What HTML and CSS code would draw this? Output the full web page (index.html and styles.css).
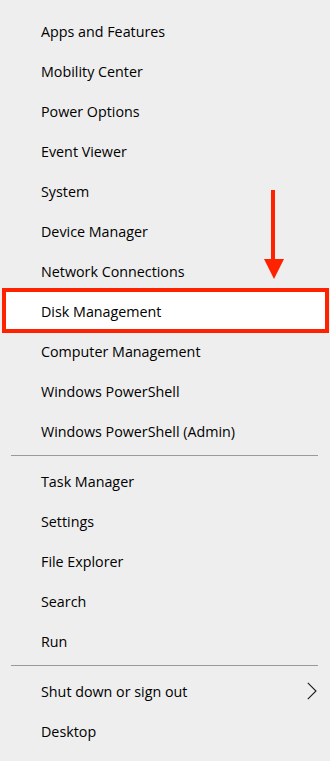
FILE: index.html
```html
<!DOCTYPE html>
<html lang="en">
<head>
<meta charset="UTF-8">
<meta name="viewport" content="width=device-width, initial-scale=1.0">
<title>Quick Link Menu</title>
<link rel="stylesheet" href="styles.css">
</head>
<body>

<div class="menu">
    <!-- First group -->
    <div class="item">Apps and Features</div>
    <div class="item">Mobility Center</div>
    <div class="item">Power Options</div>
    <div class="item">Event Viewer</div>
    <div class="item">System</div>
    <div class="item">Device Manager</div>
    <div class="item">Network Connections</div>
    <div class="item highlight"><span>Disk Management</span></div>
    <div class="item">Computer Management</div>
    <div class="item">Windows PowerShell</div>
    <div class="item">Windows PowerShell (Admin)</div>

    <div class="separator"></div>

    <!-- Second group -->
    <div class="item">Task Manager</div>
    <div class="item">Settings</div>
    <div class="item">File Explorer</div>
    <div class="item">Search</div>
    <div class="item">Run</div>

    <div class="separator"></div>

    <!-- Third group -->
    <div class="item submenu">
        <span>Shut down or sign out</span>
        <svg class="chevron" width="10" height="18" viewBox="0 0 10 18">
            <path d="M0.8 0.8 L9 9 L0.8 17.2" fill="none" stroke="#1a1a1a" stroke-width="1.1"/>
        </svg>
    </div>
    <div class="item">Desktop</div>

    <!-- Red arrow pointing at Disk Management -->
    <svg class="arrow" width="20" height="90" viewBox="0 0 20 90">
        <rect x="7" y="0" width="4" height="72" fill="#ff2200"/>
        <polygon points="0,69 20,69 10,89" fill="#ff2200"/>
    </svg>
</div>

</body>
</html>
```

FILE: styles.css
```css
body {
    margin: 0;
    padding: 0;
    background-color: #eeeeee;
    color: #000000;
    font-family: "Open Sans", "Noto Sans", Arial, sans-serif;
    font-size: 14.3px;
}

.menu {
    position: relative;
    padding: 11px 0 9px 0;
}

.item {
    display: flex;
    align-items: center;
    height: 40px;
    padding-left: 41px;
    padding-right: 13px;
    position: relative;
}

.submenu {
    justify-content: space-between;
}

.highlight span {
    position: relative;
    z-index: 1;
}

.highlight::before {
    content: "";
    position: absolute;
    top: -3px;
    bottom: -2px;
    left: 2px;
    right: 1px;
    background-color: #ffffff;
    border: 4px solid #ff2200;
}

.separator {
    height: 1px;
    margin: 4px 12px 5px 11px;
    background-color: #999999;
}

.arrow {
    position: absolute;
    top: 190px;
    left: 264px;
}
```
